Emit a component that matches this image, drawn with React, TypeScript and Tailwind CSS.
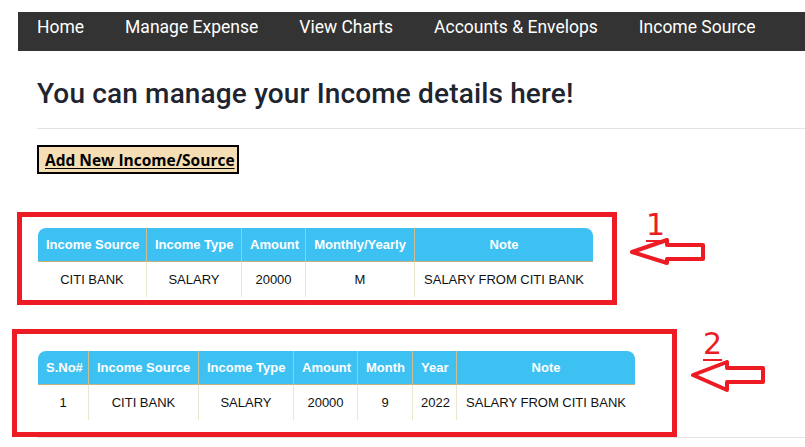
import React from "react";

const navItems = ["Home", "Manage Expense", "View Charts", "Accounts & Envelops", "Income Source"];

type Col = { label: string; w: string };

const incomeCols: Col[] = [
  { label: "Income Source", w: "w-[109px]" },
  { label: "Income Type", w: "w-[95px]" },
  { label: "Amount", w: "w-[64px]" },
  { label: "Monthly/Yearly", w: "w-[109px]" },
  { label: "Note", w: "w-[178px]" },
];
const incomeRow = ["CITI BANK", "SALARY", "20000", "M", "SALARY FROM CITI BANK"];

const monthCols: Col[] = [
  { label: "S.No#", w: "w-[51px]" },
  { label: "Income Source", w: "w-[110px]" },
  { label: "Income Type", w: "w-[95px]" },
  { label: "Amount", w: "w-[64px]" },
  { label: "Month", w: "w-[55px]" },
  { label: "Year", w: "w-[44px]" },
  { label: "Note", w: "w-[178px]" },
];
const monthRow = ["1", "CITI BANK", "SALARY", "20000", "9", "2022", "SALARY FROM CITI BANK"];

function DataTable({ cols, row, width }: { cols: Col[]; row: string[]; width: string }) {
  return (
    <table className={`table-fixed border-separate border-spacing-0 ${width} font-['Liberation_Sans',Arial,sans-serif] text-[13px]`}>
      <thead>
        <tr>
          {cols.map((c, i) => (
            <th
              key={c.label}
              className={`${c.w} h-[34px] px-2 bg-[#3dc1f3] text-white font-bold text-center whitespace-nowrap border-b border-[#c9b27a] ${
                i < cols.length - 1 ? "border-r border-r-[#cdbf92]" : ""
              } ${i === 0 ? "rounded-tl-[8px]" : ""} ${i === cols.length - 1 ? "rounded-tr-[8px]" : ""}`}
            >
              {c.label}
            </th>
          ))}
        </tr>
      </thead>
      <tbody>
        <tr>
          {row.map((v, i) => (
            <td
              key={i}
              className={`h-[35px] px-2 text-center text-[#111] whitespace-nowrap ${
                i < row.length - 1 ? "border-r border-[#ebe7cf]" : ""
              }`}
            >
              {v}
            </td>
          ))}
        </tr>
      </tbody>
    </table>
  );
}

function Marker({ n }: { n: string }) {
  return (
    <span className="font-['DejaVu_Sans',sans-serif] text-[30px] leading-[30px] text-[#ed1c24] underline decoration-2 underline-offset-[5px]">
      {n}
    </span>
  );
}

export default function App() {
  return (
    <div className="min-h-screen bg-white overflow-hidden">
      <nav className="ml-[18px] mt-[12px] h-[39px] bg-[#333333] flex items-start pt-[5px] gap-[41px] pl-[19px] font-['Roboto',sans-serif] text-[17.5px] leading-[20px] text-white">
        {navItems.map((n) => (
          <a key={n} className="whitespace-nowrap cursor-pointer">
            {n}
          </a>
        ))}
      </nav>

      <div className="pl-[37px]">
        <h3 className="mt-[26px] font-['Roboto',sans-serif] text-[28px] leading-[34px] font-medium tracking-[0.15px] text-[#1f2530]">
          You can manage your Income details here!
        </h3>
        <hr className="mt-[17px] border-0 border-t border-[#e3e3e3]" />
        <button className="mt-[16px] h-[29px] border-2 border-black bg-[#f5deb3] pl-[6px] pr-[2px] font-['Open_Sans',sans-serif] text-[15.5px] leading-[20px] font-bold text-black underline underline-offset-[2px]">
          Add New Income/Source
        </button>
      </div>

      {/* table 1 with annotation */}
      <div className="mt-[38px] ml-[17px] flex items-start">
        <div className="w-[600px] h-[93px] border-[5px] border-[#ed1c24] pl-[16px] pt-[11px]">
          <DataTable cols={incomeCols} row={incomeRow} width="w-[555px]" />
        </div>
        <div className="relative ml-[15px] w-[80px] h-[60px]">
          <div className="absolute left-[14px] top-[-2px]">
            <Marker n="1" />
          </div>
          <svg className="absolute left-[-2px] top-[26px]" width="78" height="28" viewBox="0 0 78 28">
            <polygon
              points="2,14 37,2 37,7 73,7 73,21 37,21 37,25"
              fill="none"
              stroke="#ed1c24"
              strokeWidth="4"
              strokeLinejoin="round"
            />
          </svg>
        </div>
      </div>

      {/* table 2 with annotation */}
      <div className="mt-[24px] ml-[12px] flex items-start">
        <div className="w-[665px] h-[108px] border-[5px] border-[#ed1c24] pl-[21px] pt-[17px]">
          <DataTable cols={monthCols} row={monthRow} width="w-[597px]" />
        </div>
        <div className="relative ml-[16px] w-[80px] h-[64px]">
          <div className="absolute left-[10px] top-[0px]">
            <Marker n="2" />
          </div>
          <svg className="absolute left-[-2px] top-[31px]" width="78" height="32" viewBox="0 0 78 32">
            <polygon
              points="2,15 36,2 36,8 72,8 72,22 36,22 36,30"
              fill="none"
              stroke="#ed1c24"
              strokeWidth="4"
              strokeLinejoin="round"
            />
          </svg>
        </div>
      </div>
      <hr className="ml-[37px] border-0 border-t border-[#e3e3e3]" />
    </div>
  );
}
